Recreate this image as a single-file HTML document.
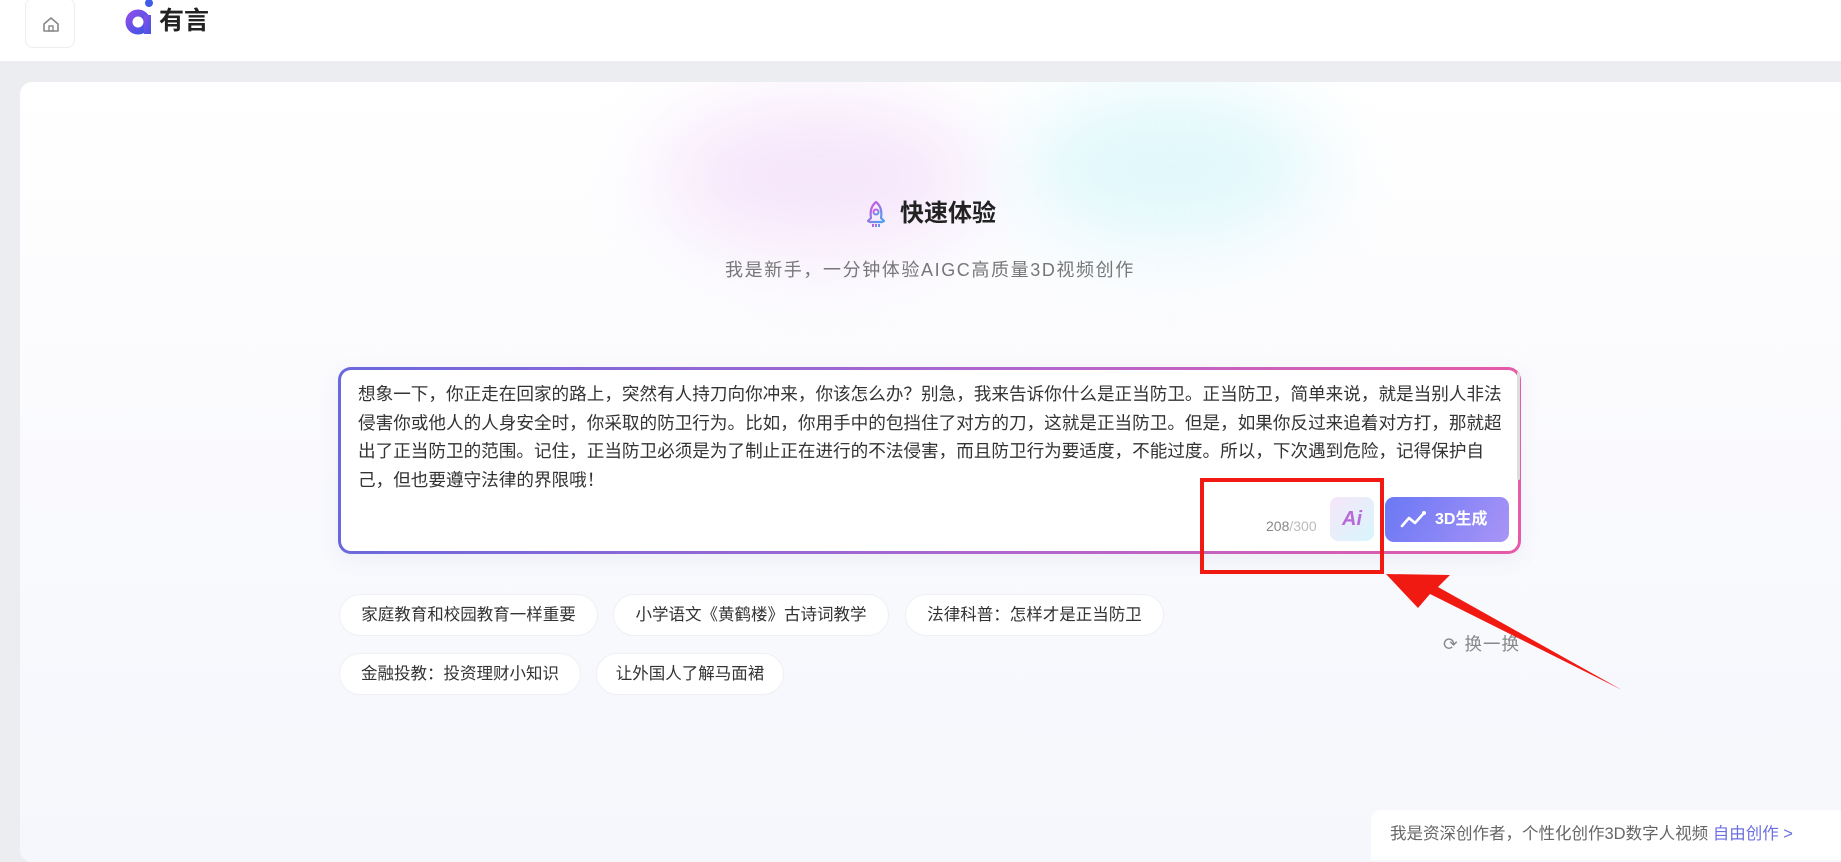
<!DOCTYPE html>
<html><head><meta charset="utf-8"><style>
*{margin:0;padding:0;box-sizing:border-box}
body{width:1841px;height:852px;overflow:hidden;background:#ebedf0;font-family:"Liberation Sans","Noto Sans CJK SC",sans-serif;position:relative}
.hdr{position:absolute;left:0;top:0;width:1841px;height:61px;background:#fff}
.home{position:absolute;left:25px;top:-2px;width:50px;height:50px;border:1px solid #eceef0;border-radius:8px;background:#fff}
.card{position:absolute;left:20px;top:82px;width:1830px;height:780px;border-radius:12px;background:linear-gradient(#fff 0,#fbfbfe 300px,#f5f7fc 780px);overflow:hidden}
.blob{position:absolute;border-radius:50%;filter:blur(40px)}
.abs{position:absolute}
.tb{position:absolute;left:338px;top:367px;width:1183px;height:187px;border-radius:13px;padding:3px;background:linear-gradient(90deg,#6b68dd,#b466cc 60%,#e65aa8);box-shadow:0 6px 20px rgba(100,100,160,.08)}
.tbi{width:100%;height:100%;background:#fff;border-radius:10px}
.txt{position:absolute;left:358px;top:380px;width:1150px;font-size:17.6px;line-height:28.5px;color:#333}
.chip{position:absolute;height:42px;border-radius:21px;background:#fff;border:1px solid #eef0f4;font-size:16.5px;color:#333;line-height:40px;text-align:center}
</style></head><body>
<div class="hdr"></div>
<div class="home"><svg width="50" height="50" viewBox="0 0 50 50"><path d="M18 25 L25 19 L32 25 V32 H18 Z" fill="none" stroke="#888" stroke-width="1.6" stroke-linejoin="round"/><rect x="23" y="27" width="4" height="5" fill="none" stroke="#888" stroke-width="1.4"/></svg></div>
<svg class="abs" style="left:124px;top:0" width="40" height="36" viewBox="0 0 40 36"><defs><linearGradient id="lg" x1="0" y1="0" x2="1" y2="1"><stop offset="0" stop-color="#8a4ee8"/><stop offset="1" stop-color="#3f55e6"/></linearGradient></defs><circle cx="14" cy="22" r="9" fill="none" stroke="url(#lg)" stroke-width="7"/><rect x="20" y="15" width="7" height="19" fill="url(#lg)"/><circle cx="25" cy="3" r="4" fill="#3f5be8"/></svg>
<div class="abs" style="left:159px;top:6px;font-size:25px;font-weight:bold;color:#222;line-height:30px">有言</div>
<div class="card">
<div class="blob" style="left:640px;top:20px;width:320px;height:150px;background:#f6e6fb"></div>
<div class="blob" style="left:1000px;top:10px;width:300px;height:150px;background:#e0f8fb"></div>
</div>
<svg class="abs" style="left:862px;top:200px" width="28" height="28" viewBox="0 0 28 28"><defs><linearGradient id="rg" x1="0" y1="0" x2="1" y2="1"><stop offset="0" stop-color="#e24de0"/><stop offset="1" stop-color="#3fa6f0"/></linearGradient></defs><path d="M14 2 C19 6 20 12 19 18 L22 21 L20 22 H8 L6 21 L9 18 C8 12 9 6 14 2 Z" fill="none" stroke="url(#rg)" stroke-width="2.2" stroke-linejoin="round"/><circle cx="14" cy="12" r="2.5" fill="none" stroke="url(#rg)" stroke-width="2"/><path d="M11 24v3M14 24v3M17 24v3" stroke="url(#rg)" stroke-width="2"/></svg>
<div class="abs" style="left:900px;top:199px;font-size:24px;font-weight:bold;color:#222;line-height:30px">快速体验</div>
<div class="abs" style="left:725px;top:258px;font-size:18px;letter-spacing:1.6px;color:#777;line-height:24px">我是新手，一分钟体验AIGC高质量3D视频创作</div>
<div class="tb"><div class="tbi"></div></div>
<div class="abs" style="left:1517px;top:372px;width:3px;height:108px;background:#ddd;border-radius:2px"></div>
<div class="txt">想象一下，你正走在回家的路上，突然有人持刀向你冲来，你该怎么办？别急，我来告诉你什么是正当防卫。正当防卫，简单来说，就是当别人非法侵害你或他人的人身安全时，你采取的防卫行为。比如，你用手中的包挡住了对方的刀，这就是正当防卫。但是，如果你反过来追着对方打，那就超出了正当防卫的范围。记住，正当防卫必须是为了制止正在进行的不法侵害，而且防卫行为要适度，不能过度。所以，下次遇到危险，记得保护自己，但也要遵守法律的界限哦！</div>
<div class="abs" style="left:1266px;top:517px;font-size:14px;color:#888;line-height:18px">208<span style="color:#bbb">/300</span></div>
<div class="abs" style="left:1330px;top:497px;width:44px;height:44px;border-radius:8px;background:linear-gradient(135deg,#f6e6fa,#d8f6fb);text-align:center;line-height:44px;font-size:20px;font-weight:bold;font-style:italic;color:#b86ad8">Ai</div>
<div class="abs" style="left:1385px;top:497px;width:124px;height:45px;border-radius:9px;background:linear-gradient(120deg,#6a78f4,#8f88f6 60%,#a995f6);color:#fff;font-size:16px;font-weight:bold;line-height:45px;padding-left:50px">3D生成</div>
<svg class="abs" style="left:1400px;top:509px" width="30" height="22" viewBox="0 0 30 22"><path d="M2 17 L9 9 L15 14 L24 4" fill="none" stroke="#fff" stroke-width="2.6" stroke-linecap="round" stroke-linejoin="round"/><circle cx="24" cy="4" r="2" fill="#fff"/></svg>
<div class="chip" style="left:339px;top:594px;width:259px">家庭教育和校园教育一样重要</div>
<div class="chip" style="left:613px;top:594px;width:276px">小学语文《黄鹤楼》古诗词教学</div>
<div class="chip" style="left:905px;top:594px;width:259px">法律科普：怎样才是正当防卫</div>
<div class="chip" style="left:339px;top:653px;width:242px">金融投教：投资理财小知识</div>
<div class="chip" style="left:596px;top:653px;width:188px">让外国人了解马面裙</div>
<div class="abs" style="left:1443px;top:633px;font-size:17.5px;letter-spacing:1px;color:#888;line-height:22px">&#x27F3; 换一换</div>
<div class="abs" style="left:1371px;top:810px;width:480px;height:50px;background:#fff;border-radius:10px 0 0 0"></div>
<div class="abs" style="left:1390px;top:823px;font-size:16.5px;color:#666;line-height:22px">我是资深创作者，个性化创作3D数字人视频 <span style="color:#6b6fe0">自由创作 &gt;</span></div>
<svg class="abs" style="left:0;top:0" width="1841" height="852"><rect x="1202" y="480" width="180" height="92" fill="none" stroke="#f01a12" stroke-width="4"/><polygon points="1386,574 1450,575 1438,587 1622,690 1430,594 1418,608" fill="#f01a12"/></svg>
</body></html>
